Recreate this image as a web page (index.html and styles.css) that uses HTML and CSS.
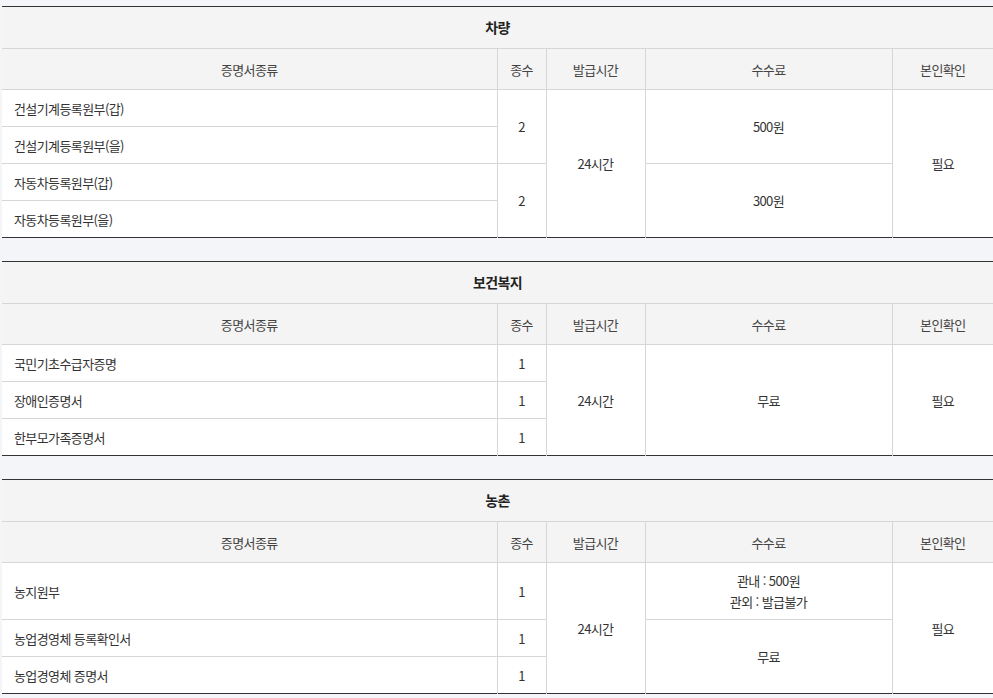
FILE: index.html
```html
<!DOCTYPE html>
<html lang="ko">
<head>
    <meta charset="UTF-8">
    <title>증명서 발급 안내</title>
    <link rel="stylesheet" href="styles.css">
</head>
<body>
    <div class="wrap">
        <table class="cert">
            <colgroup>
                <col class="c-name"><col class="c-cnt"><col class="c-time"><col class="c-fee"><col class="c-id">
            </colgroup>
            <tr><th colspan="5" class="title">차량</th></tr>
            <tr class="head"><th>증명서종류</th><th>종수</th><th>발급시간</th><th>수수료</th><th>본인확인</th></tr>
            <tr>
                <td class="name">건설기계등록원부(갑)</td>
                <td rowspan="2">2</td>
                <td rowspan="4">24시간</td>
                <td rowspan="2">500원</td>
                <td rowspan="4">필요</td>
            </tr>
            <tr><td class="name">건설기계등록원부(을)</td></tr>
            <tr>
                <td class="name">자동차등록원부(갑)</td>
                <td rowspan="2">2</td>
                <td rowspan="2">300원</td>
            </tr>
            <tr><td class="name">자동차등록원부(을)</td></tr>
        </table>

        <table class="cert">
            <colgroup>
                <col class="c-name"><col class="c-cnt"><col class="c-time"><col class="c-fee"><col class="c-id">
            </colgroup>
            <tr><th colspan="5" class="title">보건복지</th></tr>
            <tr class="head"><th>증명서종류</th><th>종수</th><th>발급시간</th><th>수수료</th><th>본인확인</th></tr>
            <tr>
                <td class="name">국민기초수급자증명</td>
                <td>1</td>
                <td rowspan="3">24시간</td>
                <td rowspan="3">무료</td>
                <td rowspan="3">필요</td>
            </tr>
            <tr><td class="name">장애인증명서</td><td>1</td></tr>
            <tr><td class="name">한부모가족증명서</td><td>1</td></tr>
        </table>

        <table class="cert">
            <colgroup>
                <col class="c-name"><col class="c-cnt"><col class="c-time"><col class="c-fee"><col class="c-id">
            </colgroup>
            <tr><th colspan="5" class="title">농촌</th></tr>
            <tr class="head"><th>증명서종류</th><th>종수</th><th>발급시간</th><th>수수료</th><th>본인확인</th></tr>
            <tr class="tall">
                <td class="name">농지원부</td>
                <td>1</td>
                <td rowspan="3">24시간</td>
                <td>관내 : 500원<br>관외 : 발급불가</td>
                <td rowspan="3">필요</td>
            </tr>
            <tr><td class="name">농업경영체 등록확인서</td><td>1</td><td rowspan="2">무료</td></tr>
            <tr><td class="name">농업경영체 증명서</td><td>1</td></tr>
        </table>
    </div>
</body>
</html>
```

FILE: styles.css
```css
body {
    margin: 0;
    padding: 0;
    background: #f4f5f9;
    font-family: "Noto Sans CJK KR", "Noto Sans", sans-serif;
    color: #333;
}

.wrap {
    padding: 6px 0 0 2px;
}

.cert {
    width: 991px;
    table-layout: fixed;
    border-collapse: collapse;
    border-top: 1px solid #333;
    border-bottom: 1px solid #333;
    background: #fff;
    margin-bottom: 23px;
    font-size: 13px;
    letter-spacing: -0.6px;
}

.c-name { width: 495px; }
.c-cnt { width: 49px; }
.c-time { width: 99px; }
.c-fee { width: 247px; }
.c-id { width: 101px; }

/* lines come from top/left edges only, so the dark table edge wins at the bottom */
.cert th,
.cert td {
    border: none;
    border-top: 1px solid #d6d6d6;
    border-left: 1px solid #d6d6d6;
    text-align: center;
    padding: 0;
    line-height: 21px;
}

.cert tr > :first-child {
    border-left: none;
}

.cert .title {
    height: 41px;
    background: #f4f4f4;
    font-weight: 700;
    font-size: 14px;
    color: #222;
    border-top: none;
}

.cert .head th {
    height: 40px;
    background: #f4f4f4;
    font-weight: 400;
    color: #444;
}

.cert td {
    height: 36px;
}

.cert .tall td {
    height: 56px;
}

.cert td.name {
    text-align: left;
    padding-left: 12px;
}
```
